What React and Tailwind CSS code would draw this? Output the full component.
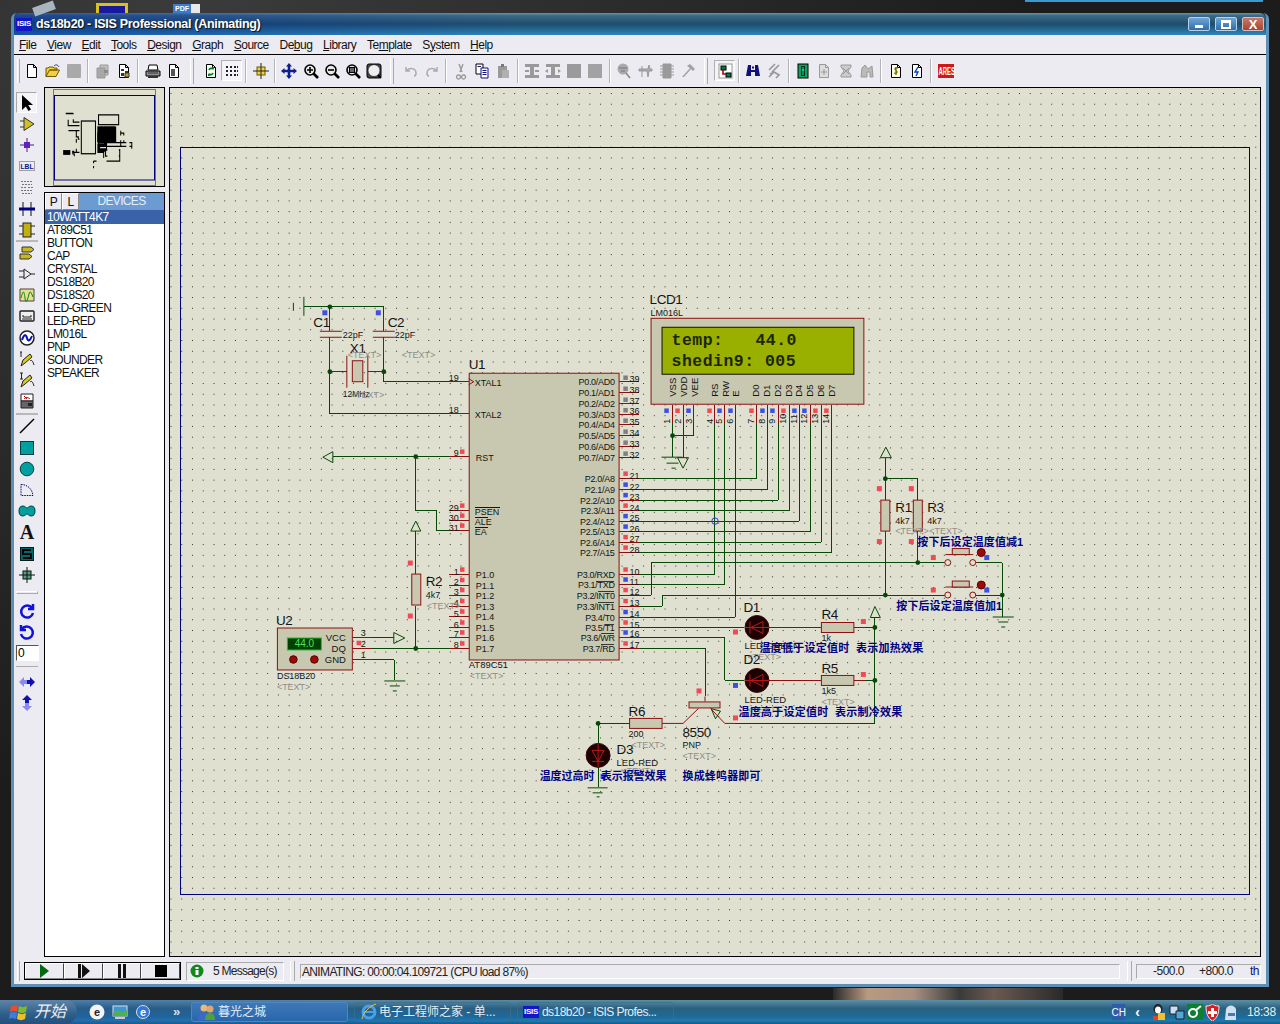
import React from 'react'

const RED = '#8c1010'
const GREEN = '#064806'
const NAVY = '#000080'
const GREY = '#8e8e88'
const INK = '#141414'

// ---- small svg helpers ----
function Ico({ children, size = 16 }) {
  return <svg width={size} height={size} viewBox="0 0 16 16" className="block overflow-visible">{children}</svg>
}

const Doc = ({ f = '#fff', s = '#000' }) => <path d="M3.5 1.5h6l3 3v10h-9z M9.5 1.5v3h3" fill={f} stroke={s} />
const Mag = ({ children }) => (
  <>
    <circle cx="7" cy="7" r="5" fill="#e8e8e8" stroke="#000" strokeWidth="1.6" />
    <path d="M10.5 10.5L15 15" stroke="#000" strokeWidth="2.6" />
    {children}
  </>
)

const toolbarIcons = {
  new: <Doc />,
  open: <><path d="M1 13.5V5h2l1-1h4l1 1h3v2H4.5L1 13.5h10l3.5-6.5H4.5" fill="#f0d040" stroke="#6a5a00" /><path d="M9 3c2-2 4-1 5 1" fill="none" stroke="#30308a" /></>,
  save: <rect x="1" y="1" width="14" height="14" rx="1" fill="#a9a9a9" />,
  imp: <><path d="M5 2h8v10H5z" fill="#c0c0c0" stroke="#999" /><path d="M2 5h8v10H2z" fill="#a8a8a8" stroke="#999" /><path d="M9 7h4v3H9z" fill="#8c8c8c" /></>,
  exp: <><Doc /><path d="M5 6h3v2H5zM9 8h3v2H9zM5 10h3v3H5z" fill="#333" /><path d="M9 10h4v4H9z" fill="#c8a020" stroke="#333" /></>,
  print: <><path d="M4 2h8l1 5H3z" fill="#fff" stroke="#000" /><path d="M1 8h14v5H1z" fill="#909090" stroke="#000" /><path d="M3 13h10v2H3z" fill="#333" /><path d="M3 10h10" stroke="#333" /></>,
  area: <><Doc /><path d="M5 6h4v7H5z" fill="#555" /></>,
  refresh: <><Doc f="#f4fff4" /><path d="M6 7a2.5 2.5 0 0 1 4-1M10 10a2.5 2.5 0 0 1-4 1" fill="none" stroke="#008020" strokeWidth="1.7" /><path d="M9 4h2v3zM7 13H5v-3z" fill="#008020" /></>,
  grid: <path d="M2 3h2v2H2zM6 3h2v2H6zM10 3h2v2h-2zM13 3h1v2h-1zM2 7h2v2H2zM6 7h2v2H6zM10 7h2v2h-2zM13 7h1v2h-1zM2 11h2v2H2zM6 11h2v2H6zM10 11h2v2h-2zM13 11h1v2h-1z" fill="#222" />,
  origin: <><rect x="4" y="4" width="8" height="8" fill="#f0d040" stroke="#6a5a00" /><path d="M0 8h16M8 0v16" stroke="#222" /></>,
  pan: <path d="M8 0l3 3.5H9.3v3.2h3.2V5L16 8l-3.5 3V9.3H9.3v3.2H11L8 16l-3-3.5h1.7V9.3H3.5V11L0 8l3.5-3v1.7h3.2V3.5H5z" fill="#10208a" />,
  zin: <Mag><path d="M4 7h6M7 4v6" stroke="#000" strokeWidth="1.6" /></Mag>,
  zout: <Mag><path d="M4 7h6" stroke="#000" strokeWidth="1.6" /></Mag>,
  zall: <Mag><rect x="4.5" y="4.5" width="5" height="5" fill="#666" stroke="#000" /></Mag>,
  zarea: <><rect x="1" y="1" width="14" height="14" rx="2" fill="#444" stroke="#000" /><circle cx="8" cy="7.5" r="5.5" fill="#eee" /><path d="M12 12l3 3" stroke="#000" strokeWidth="2" /></>,
  undo: <path d="M3 4v4h4M3.5 8C6 4 13 5 13 10c0 2-1 3-2 3" fill="none" stroke="#aaa" strokeWidth="1.5" />,
  redo: <path d="M13 4v4H9M12.500 8C10 4 3 5 3 10c0 2 1 3 2 3" fill="none" stroke="#aaa" strokeWidth="1.5" />,
  cut: <path d="M6 1l3 8M10 1L7 9M5.500 12a2 2 0 1 0 .1 0M10.500 12a2 2 0 1 0 .1 0" fill="none" stroke="#999" strokeWidth="1.4" />,
  copy: <><path d="M2 1h7v10H2z" fill="#fff" stroke="#000" /><path d="M7 5h7v10H7z" fill="#fff" stroke="#10107a" /><path d="M8.500 7.500h4M8.500 9.500h4M8.500 11.500h4M3.500 3.500h3.500" stroke="#10107a" /></>,
  paste: <><path d="M3 3h9v12H3z" fill="#999" /><path d="M6 1h3v3H6z" fill="#777" /><path d="M7 7h7v8H7z" fill="#b0b0b0" /></>,
  bcopy: <path d="M1 1h14v3h-5v8h5v3H1v-3h5V4H1zM1 7h4v2H1zM11 7h4v2h-4z" fill="#999" />,
  bmove: <path d="M1 1h14v3h-5v8h5v3H1v-3h5V4H1zM0 8l3-2v4zM16 8l-3-2v4z" fill="#999" />,
  brot: <rect x="1" y="1" width="14" height="14" fill="#9a9a9a" />,
  bdel: <rect x="1" y="1" width="14" height="14" fill="#a2a2a2" />,
  pick: <><circle cx="7" cy="6" r="5.5" fill="#aaa" /><path d="M3 5h8M5 8h4M10 10l4 5" stroke="#888" strokeWidth="1.6" /></>,
  make: <path d="M2 6h9l1-4 1 4h2v2h-3l-1 6-1-6H2zM5 3v11" stroke="#999" fill="#aaa" />,
  pack: <path d="M4 1h8v14H4zM1 3h3M1 6h3M1 9h3M1 12h3M12 3h3M12 6h3M12 9h3M12 12h3" fill="#9a9a9a" stroke="#9a9a9a" />,
  decomp: <path d="M2 14L10 5l-3-2 3-2 5 5-2 2-2-2-7 8z" fill="#a0a0a0" />,
  wire: <><rect x="2" y="1" width="13" height="14" fill="#fff" stroke="#999" /><rect x="4" y="3" width="5" height="4" fill="#008040" stroke="#000" /><rect x="9" y="10" width="5" height="4" fill="#008040" stroke="#000" /><path d="M6 7v4h3" fill="none" stroke="#b00000" strokeWidth="1.6" /></>,
  find: <path d="M3 2h3v5h4V2h3l2 11H10V9H6v4H1z M7 3.500h2v2H7z" fill="#10107a" />,
  prop: <path d="M9 1L3 7M13 2L6 9M4 11l4-2 5 3-3 3M3 14l5-5" stroke="#999" strokeWidth="1.7" fill="none" />,
  child: <><rect x="3" y="1" width="10" height="14" fill="#10a060" stroke="#000" /><path d="M6 3h4v10H6z" fill="#003010" /><path d="M8 4v8M6.500 7h3" stroke="#30e0c0" /></>,
  add: <><Doc f="#ddd" s="#999" /><path d="M8 6v6M5 9h6" stroke="#999" /></>,
  rem: <path d="M3 2h10v2l-3 4 3 4v2H3v-2l3-4-3-4zM5 5l6 6M11 5l-6 6" fill="#ccc" stroke="#999" />,
  tape: <path d="M3 5l3-3 3 4 4-3 1 11h-3V9H8v5H2z" fill="#bbb" stroke="#999" />,
  bom: <><Doc f="#ffffe8" /><path d="M10 5c-3-1-4 1-2 2.500s1 3.500-2 2.500M8 4v8" fill="none" stroke="#7a6a00" strokeWidth="1.3" /></>,
  drc: <><Doc /><path d="M9 4L6 9h3l-2 4" fill="none" stroke="#0040c0" strokeWidth="1.4" /></>,
  ares: <><rect x="0" y="1" width="16" height="14" fill="#d01818" /><text transform="translate(0.500 12) scale(.54 1)" fontSize="11" fontWeight="700" fill="#fff">ARES</text></>,
}

// order of the toolbar: name, 's' small separator, 'g' grip
const toolbar = ['new', 'open', 'save', 's', 'imp', 'exp', 's', 'print', 'area', 'g', 'refresh', 'grid', 's', 'origin', 's', 'pan', 'zin', 'zout', 'zall', 'zarea', 'g', 'undo', 'redo', 's', 'cut', 'copy', 'paste', 's', 'bcopy', 'bmove', 'brot', 'bdel', 's', 'pick', 'make', 'pack', 'decomp', 'g', 'wire', 's', 'find', 'prop', 's', 'child', 'add', 'rem', 'tape', 's', 'bom', 'drc', 's', 'ares']

const sideIcons = {
  select: <path d="M3 0v15l3.800-3.500 2.700 4.500 2.500-1.500-2.800-4.500H14z" fill="#000" />,
  comp: <><path d="M5 1.500v13L15 8z" fill="#d0c020" stroke="#333" /><path d="M1 5h4M1 11h4" stroke="#333" /></>,
  junc: <><path d="M8 1v14M1 8h14" stroke="#402080" /><rect x="5" y="5" width="6" height="6" fill="#6020c0" /></>,
  lbl: <><rect x="0.500" y="3.500" width="15" height="9" fill="none" stroke="#555" strokeDasharray="1 1" /><text x="1.500" y="11" fontSize="8" fontWeight="700" fill="#10107a" textLength="13" lengthAdjust="spacingAndGlyphs">LBL</text></>,
  script: <path d="M2 2.500h12M3 5.500h10M2 8.500h5M9 8.500h5M2 11.500h12M3 14.500h10" stroke="#777" strokeDasharray="2 1" />,
  bus: <><path d="M4 1v14M12 1v14" stroke="#111" /><path d="M0 8h16" stroke="#000080" strokeWidth="3" /></>,
  sub: <><rect x="4" y="1" width="8" height="14" fill="#c0b010" stroke="#222" /><path d="M0 4h4M0 12h4M12 4h4M12 12h4" stroke="#222" /></>,
  term: <path d="M3 2h9l3 2.500L12 7H3zM1 9h9l3 2.500L10 14H1z" fill="#c8b818" stroke="#333" />,
  port: <path d="M5 3v10l7-5zM0 5h5M0 11h5M12 8h4" fill="none" stroke="#222" />,
  graph: <><path d="M1 2v12h14V2z" fill="#e8e088" stroke="#444" /><path d="M2 11c2-8 3-8 4 0s3 0 4-4 2-2 4 3" fill="none" stroke="#008030" /></>,
  tape: <><rect x="1" y="3" width="14" height="10" rx="1" fill="#eee" stroke="#222" strokeWidth="1.4" /><path d="M4 7v2h8V7M3 11h10" stroke="#222" fill="none" /></>,
  gen: <><circle cx="8" cy="8" r="7" fill="#fff" stroke="#222" strokeWidth="1.5" /><path d="M3 10c2-6 4-6 5-2s3 3 5-2" fill="none" stroke="#0010c0" strokeWidth="2" /></>,
  vprobe: <><path d="M2 15l2-6 7-6 2 3-7 6z" fill="#d8c820" stroke="#222" /><path d="M1 1h2M2 1v5M11 10c2-2 3 1 4 4" fill="none" stroke="#222" /></>,
  iprobe: <><path d="M2 15l2-6 7-6 2 3-7 6z" fill="#d8c820" stroke="#222" /><path d="M1 1h3M2.500 1v6M1 7h3M11 10c2-2 3 1 4 4" fill="none" stroke="#222" /></>,
  inst: <><path d="M2 1h12v7H2z" fill="#fff" stroke="#222" /><path d="M8 6L5 3M5 6c2-2 4-2 6 0" stroke="#a00" fill="none" /><path d="M2 8h12v7H2z" fill="#666" stroke="#222" /><path d="M9 10h4v3H9z" fill="#222" /></>,
  line: <path d="M1 15L15 1" stroke="#000" strokeWidth="1.4" />,
  box: <rect x="1.500" y="1.500" width="13" height="13" fill="#00a0a0" stroke="#004040" />,
  circle: <circle cx="8" cy="8" r="6.800" fill="#00a0a0" stroke="#004040" />,
  arc: <path d="M2 2.500c6 0 11 4 12 11H2z" fill="none" stroke="#000080" strokeDasharray="1.500 1" />,
  path: <path d="M4 3c2 0 3 2 4 2s2-2 4-2c3 0 4 2 4 5s-1 5-4 5c-2 0-3-2-4-2s-2 2-4 2c-3 0-4-2-4-5s1-5 4-5z" fill="#00a0a0" stroke="#004040" />,
  text: <text x="8" y="15" textAnchor="middle" fontSize="20" fontWeight="700" fontFamily="Liberation Serif" fill="#111">A</text>,
  symbol: <><rect x="1.500" y="1.500" width="13" height="13" fill="#006868" stroke="#002020" /><path d="M12 4H4v4h8v4H4" fill="none" stroke="#000" strokeWidth="2" /></>,
  marker: <><rect x="4" y="4" width="8" height="8" fill="#50a080" stroke="#111" /><path d="M0 8h16M8 0v16" stroke="#111" /></>,
  cw: <path d="M13 4A6 6 0 1 0 14 9M14 0v5H9" fill="none" stroke="#1010e0" strokeWidth="2.500" />,
  ccw: <path d="M3 4A6 6 0 1 1 2 9M2 0v5h5" fill="none" stroke="#1010e0" strokeWidth="2.500" />,
  mirrorh: <><path d="M0 8l5-5v3h3v4H5v3z" fill="#8a8af0" /><path d="M16 8l-5-5v3H8v4h3v3z" fill="#1010b0" /></>,
  mirrorv: <><path d="M8 0l5 5h-3v3H6V5H3z" fill="#1010b0" /><path d="M8 16l5-5h-3V8H6v3H3z" fill="#8a8af0" /></>,
}

const Grip = ({ className }) => <div className={className} />

function SideBtn({ name, active }) {
  return (
    <div className={`flex h-[21.2px] w-[21px] items-center justify-center ${active ? 'border border-t-[#a8a8a8] border-r-white border-b-white border-l-[#a8a8a8] bg-[#f4f4f8]' : ''}`}>
      <Ico>{sideIcons[name]}</Ico>
    </div>
  )
}

function ToolStrip() {
  const a = ['comp', 'junc', 'lbl', 'script', 'bus', 'sub']
  const b = ['term', 'port', 'graph', 'tape', 'gen', 'vprobe', 'iprobe', 'inst']
  const c = ['line', 'box', 'circle', 'arc', 'path', 'text', 'symbol', 'marker']
  return (
    <div className="flex w-[30px] shrink-0 flex-col items-start pl-[2px] pt-[6px]">
      <SideBtn name="select" active />
      {a.map(n => <SideBtn key={n} name={n} />)}
      <Grip className="h-[2px] w-[22px] bg-[#b8b8b8]" />
      {b.map(n => <SideBtn key={n} name={n} />)}
      <Grip className="my-[1px] h-[2px] w-[22px] bg-[#b8b8b8]" />
      {c.map(n => <SideBtn key={n} name={n} />)}
      <Grip className="mb-[7px] mt-[6px] h-[3px] w-[22px] border border-b-[#aaa] border-l-white border-r-[#aaa] border-t-white" />
      <SideBtn name="cw" />
      <SideBtn name="ccw" />
      <div className="mt-[1px] h-[16px] w-[23px] border border-t-[#555] border-l-[#555] border-b-white border-r-white bg-white pl-[1px] text-[12px] leading-[14px] text-black">0</div>
      <Grip className="my-[5px] h-[1px] w-[22px] bg-[#aaa]" />
      <SideBtn name="mirrorh" />
      <SideBtn name="mirrorv" />
    </div>
  )
}

function Sidebar() {
  const devices = ['AT89C51', 'BUTTON', 'CAP', 'CRYSTAL', 'DS18B20', 'DS18S20', 'LED-GREEN', 'LED-RED', 'LM016L', 'PNP', 'SOUNDER', 'SPEAKER']
  return (
    <div className="flex w-[121px] shrink-0 flex-col gap-[5px] pb-[1px] pt-[1px]">
      <div className="relative h-[100px] border border-black bg-[#e0e0d0]">
        <Minimap />
      </div>
      <div className="flex flex-1 flex-col border border-black bg-white text-[12px] tracking-[-0.65px] text-[#101010]">
        <div className="flex h-[17px] bg-[#6c9bd2]">
          <div className="flex w-[17px] items-center justify-center border border-r-[#888] border-b-[#888] border-l-white border-t-white bg-[#ecebf1]">P</div>
          <div className="flex w-[17px] items-center justify-center border border-r-[#888] border-b-[#888] border-l-white border-t-white bg-[#ecebf1]">L</div>
          <div className="flex-1 text-center leading-[16px] text-[#e4eef8]">DEVICES</div>
        </div>
        <div className="h-[13.6px] bg-[#3a62a8] pl-[2px] leading-[14px] text-white">10WATT4K7</div>
        {devices.map(d => <div key={d} className="h-[13px] pl-[2px] leading-[13px]">{d}</div>)}
      </div>
    </div>
  )
}

function Minimap() {
  return (
    <svg className="block h-full w-full" viewBox="45 88 119 98">
      <rect x="53.500" y="89.500" width="102" height="96" fill="none" stroke="#20b020" />
      <rect x="54.500" y="95.500" width="100" height="84.500" fill="none" stroke="#000080" />
      <g transform="translate(37 78.500) scale(.0945 .114)" fill="none" stroke="#000" vectorEffect="non-scaling-stroke">
        <path d={WIRES} strokeWidth="11" />
        <rect x="469" y="373" width="150" height="287" strokeWidth="11" />
        <rect x="651" y="319" width="213" height="86" strokeWidth="11" />
        <rect x="277" y="628" width="75" height="42" fill="#000" />
        <rect x="639" y="420" width="190" height="140" fill="#000" />
      </g>
    </svg>
  )
}

// ---- schematic, in page coordinates ----
const WIRES = [
  'M304 307H384M330 307V314M384 307V314M330 362V414H449M384 358V382H449',
  'M333 457H449M416 457V511H437V531H449',
  'M639 479H757V423M639 490H768V423M639 500.500H779V423M639 511H790V423M639 521.500H800V423M639 532H811V423M639 542.500H822V423M639 553H832.500V423',
  'M639 575H715V423M639 585H725.500V423M639 595.500H651.500V563H945M639 606.500H662.500V595.500H945M639 617.500H736V423',
  'M639 628H745M639 638H725.500V681H745M639 649H705.500V697',
  'M673 423V457M683.500 423V458M694 423V436H673',
  'M979 563H1003V617M979 595.500H1003',
  'M886 458V501M886 479H918.500V501M886 541V595M918.500 541V563',
  'M866 628H875.500M866 681H875.500M875.500 618V724H736',
  'M598.500 724H630M598.500 724V744M598.500 768V788',
  'M416 531V563M416 617V649M372 649H449M372 638.500H394M372 660.500H394.600V681',
].join('')

const pinsL = [575, 585.5, 595.5, 606.5, 617, 628, 638, 649]
const p0 = [382, 393, 404, 414.5, 425, 436, 447, 458]
const p2 = [479, 490, 500.5, 511, 521.5, 532, 542.5, 553]
const p3 = [575, 585, 595.5, 606.5, 617.5, 628, 638, 649]

const LEADS = [
  'M330 314V331M330 337V362M384 314V331M384 337V358M330 372H347M368 372H384',
  'M449 382H469M449 414H469M449 457H469M449 511H469M449 521H469M449 531H469',
  ...pinsL.map(y => `M449 ${y}H469`),
  ...[...p0, ...p2, ...p3].map(y => `M619 ${y}H639`),
  ...[673, 683.5, 694, 715, 725.5, 736, 757, 768, 779, 790, 800, 811, 822, 832.5].map(x => `M${x} 405V423`),
  'M945 563H948M976 563H979M945 595.500H948M976 595.500H979',
  'M769 628H822M855 628H866M769 681H822M855 681H866',
  'M886 501V541M918.500 501V541',
  'M352 638.500H372M352 649H372M352 660.500H372',
  'M598.500 744V768M416 563V574M416 606V617',
].join('')

const Sq = ({ x, y, c = 'r', s = 5 }) => (
  <rect x={x - s / 2} y={y - s / 2} width={s} height={s} fill={c === 'r' ? '#f04a55' : c === 'b' ? '#3f50e0' : '#808080'} />
)

function T({ x, y, s = 9, c = INK, a, w, bold, children, r, ls }) {
  return (
    <text
      x={x}
      y={y}
      fontSize={s}
      fill={c}
      textAnchor={a}
      fontWeight={bold ? 700 : 400}
      letterSpacing={ls}
      textLength={w}
      lengthAdjust={w ? 'spacing' : undefined}
      transform={r ? `rotate(-90 ${x} ${y})` : undefined}
    >
      {children}
    </text>
  )
}

const Ref = props => <T s={13.500} ls={-0.4} {...props} />
const Tag = ({ x, y }) => <T x={x} y={y} c={GREY} s={9}>{'<TEXT>'}</T>
const Note = props => <T s={11} c={NAVY} bold {...props} />

const Arrow = ({ points }) => <polygon points={points} fill="none" stroke={GREEN} />
const Dot = ({ x, y }) => <circle cx={x} cy={y} r="2.400" fill={GREEN} />

function Led({ x, y, down }) {
  return (
    <g>
      <circle cx={x} cy={y} r="12" fill="#1c0202" stroke="#3a0808" />
      {down
        ? <path d={`M${x - 6} ${y - 5}h12l-6 11zM${x - 6} ${y + 6}h12M${x} ${y - 12}v24`} fill="none" stroke="#c01818" />
        : <path d={`M${x + 6} ${y - 6}v12l-12-6zM${x - 7} ${y - 6}v12M${x - 12} ${y}h24`} fill="none" stroke="#c01818" />}
    </g>
  )
}

function Button({ y }) {
  return (
    <g>
      <path d={`M946 ${y - 8}H974`} stroke={RED} />
      <rect x="953" y={y - 14} width="17" height="6" fill="#c8c8b0" stroke={RED} />
      <circle cx="948.500" cy={y} r="3" fill="#e0e0d0" stroke={RED} />
      <circle cx="973.500" cy={y} r="3" fill="#e0e0d0" stroke={RED} />
      <circle cx="982" cy={y - 10} r="4" fill="#a00808" stroke="#500" />
      <Sq x={934} y={y - 5} />
      <Sq x={987.500} y={y - 5} c="b" />
    </g>
  )
}

const Res = ({ x, y, v }) => v
  ? <rect x={x} y={y} width="9" height="31" fill="#c8c8b0" stroke={RED} />
  : <rect x={x} y={y} width="32.500" height="10" fill="#c8c8b0" stroke={RED} />

function Ground({ x, y, w = 21 }) {
  return <path d={`M${x - w / 2} ${y}h${w}M${x - 5} ${y + 5}h10M${x - 2} ${y + 10}h4`} stroke={GREEN} fill="none" />
}

function Chip() {
  const names0 = ['P0.0/AD0', 'P0.1/AD1', 'P0.2/AD2', 'P0.3/AD3', 'P0.4/AD4', 'P0.5/AD5', 'P0.6/AD6', 'P0.7/AD7']
  const names2 = ['P2.0/A8', 'P2.1/A9', 'P2.2/A10', 'P2.3/A11', 'P2.4/A12', 'P2.5/A13', 'P2.6/A14', 'P2.7/A15']
  const names3 = ['P3.0/RXD', 'P3.1/TXD', 'P3.2/INT0', 'P3.3/INT1', 'P3.4/T0', 'P3.5/T1', 'P3.6/WR', 'P3.7/RD']
  const c2 = 'rbbrbbrr'
  const c3 = 'rbrrbrbr'
  return (
    <g>
      <rect x="469.500" y="373.500" width="150" height="287" fill="#c8c8b0" stroke={RED} />
      <T x={475} y={386}>XTAL1</T>
      <T x={475} y={418}>XTAL2</T>
      <T x={476} y={461}>RST</T>
      <T x={475} y={515}>PSEN</T>
      <T x={475} y={525}>ALE</T>
      <T x={475} y={535}>EA</T>
      <path d="M475 507.500H500M475 517.500H488M475 528H488" stroke={INK} shapeRendering="crispEdges" />
      <path d="M469 379l5 3-5 3" fill="none" stroke={RED} />
      {pinsL.map((y, i) => <T key={y} x={476} y={y + 3.500}>{`P1.${i}`}</T>)}
      {names0.map((n, i) => <T key={n} x={615} y={p0[i] + 3.500} a="end" ls={-0.3}>{n}</T>)}
      {names2.map((n, i) => <T key={n} x={615} y={p2[i] + 3.500} a="end" ls={-0.3}>{n}</T>)}
      {names3.map((n, i) => <T key={n} x={615} y={p3[i] + 3.500} a="end" ls={-0.3}>{n}</T>)}
      <path d="M596 581.500H614M598 591.500H614M598 602.500H614M605 624.500H614M601 634.500H614M601 645.500H614" stroke={INK} strokeWidth=".8" shapeRendering="crispEdges" />

      {p0.map((y, i) => <g key={y}><Sq x={626} y={y - 4} c="g" s={4.500} /><T x={630} y={y}>{39 - i}</T></g>)}
      {p2.map((y, i) => <g key={y}><Sq x={626} y={y - 5} c={c2[i]} s={4.500} /><T x={630} y={y}>{21 + i}</T></g>)}
      {p3.map((y, i) => <g key={y}><Sq x={626} y={y - 5} c={c3[i]} s={4.500} /><T x={630} y={y}>{10 + i}</T></g>)}
      {pinsL.map((y, i) => <g key={y}><Sq x={462.500} y={y - 5} s={4.500} /><T x={459} y={y} a="end">{i + 1}</T></g>)}
      <T x={449} y={381}>19</T>
      <T x={449} y={413}>18</T>
      <T x={459} y={456} a="end">9</T>
      <Sq x={462.500} y={452} s={4.500} />
      {[['29', 511], ['30', 521], ['31', 531]].map(([n, y]) => <g key={n}><Sq x={462.500} y={y - 5} s={4.500} /><T x={459} y={y} a="end">{n}</T></g>)}
    </g>
  )
}

const LcdText = ({ x, y, children }) => (
  <text x={x} y={y} fontSize="16.500" fontWeight="700" fontFamily="Liberation Mono" fill="#1c2400" letterSpacing="0.5">{children}</text>
)

function Lcd() {
  const pins = [[673, 'b', 1, 667], [683.5, 'r', 2, 678], [694, 'b', 3, 689], [715, 'r', 4, 710], [725.5, 'b', 5, 720], [736, 'b', 6, 731], [757, 'r', 7, 752], [768, 'b', 8, 763], [779, 'b', 9, 773], [790, 'r', 10, 784], [800, 'b', 11, 795], [811, 'b', 12, 805], [822, 'r', 13, 816], [832.5, 'r', 14, 827]]
  const labels = [[673, 'VSS'], [684, 'VDD'], [695, 'VEE'], [716, 'RS'], [727, 'RW'], [737, 'E'], [757, 'D0'], [768, 'D1'], [779, 'D2'], [790, 'D3'], [800, 'D4'], [811, 'D5'], [822, 'D6'], [833, 'D7']]
  return (
    <g>
      <rect x="651.500" y="318.500" width="213" height="86" fill="#c8c8b0" stroke={RED} />
      <rect x="662.500" y="327.500" width="192" height="47" fill="#9ab000" stroke="#101010" />
      <LcdText x={672} y={345}>temp:</LcdText>
      <LcdText x={756} y={345}>44.0</LcdText>
      <LcdText x={672} y={366}>shedin9: 005</LcdText>
      {labels.map(([x, n]) => <T key={n} x={x + 3} y={397} r s={9.500}>{n}</T>)}
      {pins.map(([x, c, n, sx]) => (
        <g key={n}>
          <Sq x={sx} y={411} c={c} s={4.500} />
          <T x={sx + 3} y={424} r s={9}>{n}</T>
        </g>
      ))}
    </g>
  )
}

function Schematic() {
  return (
    <svg className="block h-full w-full" viewBox="170 88 1091 868" preserveAspectRatio="xMinYMin" fontFamily="Liberation Sans, Noto Sans CJK SC, sans-serif">
      <defs>
        <pattern id="dots" x="170.500" y="93" width="10.750" height="10.750" patternUnits="userSpaceOnUse">
          <rect width="1" height="1" fill="#333" />
        </pattern>
      </defs>
      <rect x="170" y="88" width="1091" height="868" fill="url(#dots)" shapeRendering="crispEdges" />
      <rect x="181" y="148" width="1069" height="747" fill="none" stroke={NAVY} strokeWidth="1" shapeRendering="crispEdges" />

      <path d={WIRES} fill="none" stroke={GREEN} shapeRendering="crispEdges" />
      <path d={LEADS} fill="none" stroke={RED} shapeRendering="crispEdges" />
      <path d="M662.600 724H683.500L699 709M711 709L725.300 724H736M705.500 697V702" fill="none" stroke={RED} />

      {/* battery and caps */}
      <path d="M293.500 303v8M304 297v19" stroke={GREEN} />
      <path d="M320 331.500h22M320 337.500h22M373 331.500h22M373 337.500h22M347 356v32M368 356v32" stroke={RED} />
      <rect x="352.500" y="361" width="10.500" height="21" fill="#c8c8b0" stroke={RED} />
      <Sq x={325} y={313} c="b" />
      <Sq x={378.500} y={313} c="b" />
      <Dot x={330} y={307} /><Dot x={330} y={372} /><Dot x={384} y={372} /><Dot x={416} y={457} /><Dot x={416} y={649} />
      <Ref x={313.500} y={327}>C1</Ref>
      <Ref x={388} y={327}>C2</Ref>
      <T x={343} y={338}>22pF</T>
      <T x={395} y={338}>22pF</T>
      <Ref x={350} y={353}>X1</Ref>
      <Tag x={348} y={358} />
      <Tag x={402} y={358} />
      <T x={343} y={397} s={8.500}>12MHz</T>
      <Tag x={351} y={398} />

      <Arrow points="323,457.500 333,452 333,463" />
      <Chip />
      <Ref x={469} y={369}>U1</Ref>
      <T x={469} y={669} s={9.500}>AT89C51</T>
      <Tag x={470} y={680} />

      {/* LCD */}
      <Ref x={650} y={304}>LCD1</Ref>
      <T x={651} y={316} s={9}>LM016L</T>
      <Tag x={652} y={326} />
      <Lcd />
      <Dot x={673} y={436} />
      <path d="M662 457.500h21M667 463.500h12M672 468.500h4" stroke={GREEN} />
      <Arrow points="678,458 689,458 683.500,468.500" />
      <circle cx="715.500" cy="521.500" r="3.200" fill="none" stroke="#3040c0" />

      {/* pull ups and push buttons */}
      <Arrow points="881,458 892,458 886.500,447.500" />
      <Dot x={886} y={479} /><Dot x={918.500} y={563} /><Dot x={886} y={595.500} /><Dot x={1003} y={595.500} />
      <Res x={881.500} y={500.500} v />
      <Res x={914} y={500.500} v />
      <Sq x={880} y={489} /><Sq x={912} y={489} /><Sq x={880} y={542} /><Sq x={912} y={542} />
      <Ref x={896} y={512}>R1</Ref>
      <Ref x={928} y={512}>R3</Ref>
      <T x={896} y={524}>4k7</T>
      <T x={928} y={524}>4k7</T>
      <Tag x={896} y={534} />
      <Tag x={930} y={534} />
      <Button y={563} />
      <Button y={595.500} />
      <Note x={918} y={546} w={106}>按下后设定温度值减1</Note>
      <Note x={897} y={610} w={106}>按下后设定温度值加1</Note>
      <Ground x={1004} y={617.500} />

      {/* leds */}
      <Led x={757.500} y={628} />
      <Led x={757.500} y={681} />
      <Res x={822} y={623} /><Res x={822} y={676} />
      <Arrow points="871,618 881,618 875.500,607" />
      <Dot x={875.500} y={628} /><Dot x={875.500} y={681} />
      <Sq x={736} y={632.500} /><Sq x={864} y={622} /><Sq x={736} y={686} c="b" /><Sq x={864} y={675} />
      <Ref x={744} y={612}>D1</Ref>
      <T x={745} y={650} s={9.500}>LED-GREEN</T>
      <Tag x={748} y={661} />
      <Ref x={744} y={665}>D2</Ref>
      <T x={745} y={704} s={9.500}>LED-RED</T>
      <Tag x={748} y={714} />
      <Ref x={822} y={619}>R4</Ref>
      <T x={822} y={642}>1k</T>
      <Ref x={822} y={674}>R5</Ref>
      <T x={822} y={695}>1k5</T>
      <Tag x={822} y={706} />
      <Note x={760} y={653} w={164}>{'温度低于设定值时\u00a0\u00a0表示加热效果'}</Note>
      <Note x={739} y={717} w={164}>{'温度高于设定值时\u00a0\u00a0表示制冷效果'}</Note>

      {/* buzzer transistor */}
      <rect x="689.500" y="702.500" width="31" height="6" fill="#c8c8b0" stroke={RED} />
      <polygon points="711.700,709.300 721,711.700 716,719.300" fill="none" stroke={GREEN} />
      <Sq x={699.500} y={691.500} /><Sq x={736} y={718.500} />
      <Res x={630} y={719} />
      <Dot x={598.500} y={724} />
      <Ref x={683} y={738}>8550</Ref>
      <T x={683} y={749}>PNP</T>
      <Tag x={683} y={760} />
      <Ref x={629} y={717}>R6</Ref>
      <T x={629} y={738} s={9}>200</T>
      <Tag x={632} y={749} />
      <Led x={598.500} y={756} down />
      <Ref x={617} y={755}>D3</Ref>
      <T x={617} y={767} s={9.500}>LED-RED</T>
      <Tag x={622} y={775} />
      <Sq x={603.500} y={777} c="b" />
      <Note x={540} y={781} w={127}>{'温度过高时\u00a0\u00a0表示报警效果'}</Note>
      <Note x={683} y={781} w={78}>换成蜂鸣器即可</Note>
      <path d="M588 788.500h20M593 793.500h10M597 797.500h3" stroke={GREEN} />

      {/* DS18B20 */}
      <rect x="277.500" y="628.500" width="75" height="42" fill="#c8c8b0" stroke={RED} />
      <rect x="287.500" y="638.500" width="34" height="12" fill="#004000" stroke="#20c030" />
      <T x={304.500} y={648} s={10} c="#50e060" a="middle">44.0</T>
      <circle cx="293.500" cy="660" r="3.800" fill="#a00808" stroke="#500" />
      <circle cx="314.500" cy="660" r="3.800" fill="#a00808" stroke="#500" />
      <T x={346} y={642} a="end" s={9.500}>VCC</T>
      <T x={346} y={653} a="end" s={9.500}>DQ</T>
      <T x={346} y={664} a="end" s={9.500}>GND</T>
      <T x={361} y={637}>3</T>
      <T x={361} y={648}>2</T>
      <T x={361} y={659}>1</T>
      <Sq x={359} y={643.500} s={4.500} />
      <Arrow points="394,633 394,644 405,638.500" />
      <Ground x={395} y={681.500} />
      <Ref x={276} y={625}>U2</Ref>
      <T x={277} y={680} s={9}>DS18B20</T>
      <Tag x={277} y={691} />

      {/* R2 */}
      <Arrow points="411,531.500 421,531.500 416,521.500" />
      <Res x={412} y={574.500} v />
      <Sq x={410.500} y={563.500} /><Sq x={410.500} y={616.500} />
      <Ref x={426} y={586}>R2</Ref>
      <T x={426} y={598}>4k7</T>
      <Tag x={427} y={609} />
    </svg>
  )
}

// ---- window chrome ----
const IsisLogo = ({ w = 16, h = 13 }) => (
  <span style={{ width: w, height: h }} className="flex shrink-0 items-center justify-center bg-[#1515c8] text-[8px] font-bold leading-none tracking-[-0.3px] text-white">ISIS</span>
)

function TitleBar() {
  return (
    <div className="flex h-[22px] shrink-0 items-center rounded-t-[6px] bg-[linear-gradient(90deg,rgba(0,35,150,.5),rgba(0,35,150,0)_40%),linear-gradient(180deg,#6a93a8,#3b6a86_12%,#1f4d6c_50%,#276e9c_80%,#2c87bd)] pl-[2px] pr-[2px]">
      <IsisLogo />
      <span className="ml-[4px] text-[12.500px] font-bold tracking-[-0.3px] text-white [text-shadow:1px_1px_1px_#111]">ds18b20 - ISIS Professional (Animating)</span>
      <div className="ml-auto flex items-center gap-[5px]">
        <div className="flex h-[14px] w-[22px] items-end justify-center rounded-[2px] border border-[#b8d0e0] bg-[linear-gradient(#6fa6d6,#2c6cb0)] pb-[2px]"><div className="h-[3px] w-[8px] bg-white" /></div>
        <div className="flex h-[14px] w-[22px] items-center justify-center rounded-[2px] border border-[#b8d0e0] bg-[linear-gradient(#6fa6d6,#2c6cb0)]"><div className="h-[9px] w-[10px] border-2 border-t-[3px] border-white" /></div>
        <div className="flex h-[14px] w-[22px] items-center justify-center rounded-[2px] border border-[#d0c0c0] bg-[linear-gradient(#c87a6a,#a84430)] text-[13px] font-bold leading-none text-white">X</div>
      </div>
    </div>
  )
}

function MenuBar() {
  const items = [['', 'F', 'ile'], ['', 'V', 'iew'], ['', 'E', 'dit'], ['', 'T', 'ools'], ['', 'D', 'esign'], ['', 'G', 'raph'], ['', 'S', 'ource'], ['De', 'b', 'ug'], ['', 'L', 'ibrary'], ['Te', 'm', 'plate'], ['S', 'y', 'stem'], ['', 'H', 'elp']]
  return (
    <div className="flex h-[20px] shrink-0 items-center gap-[10.700px] border-b border-black bg-[#ecebf1] pl-[5px] text-[12px] tracking-[-0.5px] text-[#111]">
      {items.map(([a, b, c]) => <span key={a + b + c}>{a}<span className="underline">{b}</span>{c}</span>)}
    </div>
  )
}

function Toolbar() {
  return (
    <div className="flex h-[31px] shrink-0 items-center bg-[#ecebf1] pl-[3px]">
      <Grip className="mr-[1px] h-[24px] w-[3px] border-l border-r border-l-white border-r-[#aaa]" />
      {toolbar.map((t, i) => {
        if (t === 's') return <div key={i} className="flex h-[24px] w-[7.600px] justify-center"><div className="h-full w-[2px] border-l border-r border-l-[#b4b4b4] border-r-white" /></div>
        if (t === 'g') return <div key={i} className="flex h-[26px] w-[15.500px] justify-center"><div className="h-full w-[4px] border-l border-r border-l-white border-r-[#aaa]" /></div>
        return (
          <div key={i} className={`flex h-[21px] w-[21.200px] items-center justify-center ${t === 'grid' || t === 'wire' ? 'border border-b-white border-l-[#b0b0b0] border-r-white border-t-[#b0b0b0] bg-[#f4f4f8]' : ''}`}>
            <Ico>{toolbarIcons[t]}</Ico>
          </div>
        )
      })}
    </div>
  )
}

const SimBtn = ({ children }) => (
  <div className="flex h-full flex-1 items-center justify-center border border-b-[#888] border-l-white border-r-[#444] border-t-white bg-[#ecebf1]">
    <svg width="14" height="14" viewBox="0 0 14 14">{children}</svg>
  </div>
)

function StatusBar() {
  return (
    <div className="flex h-[26px] shrink-0 items-center bg-[#ecebf1] pl-[3px] pr-[5px] text-[12px] text-[#222]">
      <Grip className="mr-[4px] h-[20px] w-[3px] border-l border-r border-l-white border-r-[#aaa]" />
      <div className="flex h-[18px] w-[157px] border border-black">
        <SimBtn><path d="M3 0l9 7-9 7z" fill="#006a10" /></SimBtn>
        <SimBtn><path d="M2 0h3v14H2zM6 0l8 7-8 7z" fill="#111" /></SimBtn>
        <SimBtn><path d="M3 0h3v14H3zM8 0h3v14H8z" fill="#111" /></SimBtn>
        <SimBtn><path d="M1 1h12v12H1z" fill="#000" /></SimBtn>
      </div>
      <div className="ml-[5px] flex h-[19px] w-[98px] items-center border border-b-white border-l-[#aaa] border-r-white border-t-[#aaa] pl-[3px]">
        <svg width="14" height="14" viewBox="0 0 14 14"><circle cx="7" cy="7" r="6.500" fill="#10891a" /><path d="M5.500 3h3v2h-3zM5.500 6h3v5h-3z" fill="#fff" /></svg>
        <span className="ml-[9px] tracking-[-0.75px]">5 Message(s)</span>
      </div>
      <Grip className="ml-[6px] h-[20px] w-[5px] border-l border-r border-l-white border-r-[#aaa]" />
      <div className="ml-[5px] h-[15px] flex-1 border border-b-white border-l-[#aaa] border-r-white border-t-[#aaa] pl-[1px] leading-[14px] tracking-[-0.65px]">ANIMATING: 00:00:04.109721 (CPU load 87%)</div>
      <Grip className="ml-[7px] h-[20px] w-[5px] border-l border-r border-l-white border-r-[#aaa]" />
      <div className="ml-[4px] flex h-[15px] w-[125px] items-center border border-b-white border-l-[#aaa] border-r-white border-t-[#aaa] leading-[14px] tracking-[-0.5px]">
        <span className="w-[47px] text-right">-500.0</span>
        <span className="w-[49px] text-right">+800.0</span>
        <span className="ml-[17px] text-[#10107a]">th</span>
      </div>
    </div>
  )
}

function TaskBtn({ active, children, icon }) {
  return (
    <div className={`flex h-[20px] w-[157px] items-center gap-[1px] rounded-[3px] pl-[5px] text-[12px] text-[#e4edf5] ${active ? 'border border-[#4f86bc] bg-[linear-gradient(#3d78b8,#2a66ac)]' : 'border border-[#3f6f88]/70'}`}>
      {icon}
      {children}
    </div>
  )
}

function TaskBar() {
  return (
    <div className="flex h-[24px] shrink-0 items-center bg-[linear-gradient(90deg,rgba(40,80,170,.3),rgba(40,80,170,0)_50%),linear-gradient(180deg,#5d8ea6,#2a617f_35%,#1d6a99_70%,#1f7aae_85%,#175a88)] text-white">
      <div className="flex h-full w-[77px] items-center gap-[5px] rounded-r-[12px] bg-[linear-gradient(#5e84a8,#2e5e8c_60%,#22507c)] pl-[9px]">
        <svg width="20" height="18" viewBox="0 0 20 18">
          <path d="M2 3c2-1.500 4-1.500 7 0l-1 6c-3-1.500-5-1.500-7 0z" fill="#e84c28" />
          <path d="M10 3c3 1.500 5 1.500 8 0l-1 6c-3 1.500-5 1.500-8 0z" fill="#7cbc2c" />
          <path d="M1 10c2-1.500 4-1.500 7 0l-1 6c-3-1.500-5-1.500-7 0z" fill="#3c7ce0" />
          <path d="M9 10c3 1.500 5 1.500 8 0l-1 6c-3 1.500-5 1.500-8 0z" fill="#f0c020" />
        </svg>
        <span className="text-[16px] italic text-[#eee]">开始</span>
      </div>
      <div className="ml-[12px] flex w-[102px] items-center gap-[7px]">
        <svg width="16" height="16" viewBox="0 0 16 16"><circle cx="8" cy="8" r="7.500" fill="#f4f4f4" /><text x="8" y="12" textAnchor="middle" fontSize="11" fontWeight="700" fill="#222">e</text></svg>
        <svg width="16" height="16" viewBox="0 0 16 16"><rect x="1" y="2" width="14" height="10" fill="#3a96d8" stroke="#ddd" /><path d="M1 9l5-3 4 2 5-2v6H1z" fill="#50b050" /><path d="M3 14h10" stroke="#ccc" strokeWidth="2" /></svg>
        <svg width="16" height="16" viewBox="0 0 16 16"><circle cx="8" cy="8" r="6.500" fill="#2f78d8" stroke="#ddd" /><text x="8" y="12" textAnchor="middle" fontSize="11" fontWeight="700" fill="#fff">e</text></svg>
        <span className="ml-[15px] text-[13px] font-bold text-[#dde]">»</span>
      </div>
      <TaskBtn active icon={<svg width="20" height="18" viewBox="0 0 20 18"><circle cx="7" cy="5" r="3.500" fill="#e8b878" /><path d="M1 17c0-6 3-8 6-8s5 2 5 8z" fill="#3a6ac8" /><circle cx="13" cy="6" r="3.500" fill="#e0a868" /><path d="M8 17c0-5 2-7 5-7s5 2 5 7z" fill="#50a040" /></svg>}>暮光之城</TaskBtn>
      <div className="w-[6px]" />
      <TaskBtn icon={<svg width="18" height="18" viewBox="0 0 18 18"><circle cx="9" cy="9" r="6" fill="none" stroke="#48a0e8" strokeWidth="3" /><path d="M4 9h10" stroke="#48a0e8" strokeWidth="2" /><path d="M2 16C3 9 10 3 16 1" fill="none" stroke="#e8c040" /></svg>}>电子工程师之家 - 单...</TaskBtn>
      <div className="w-[6px]" />
      <TaskBtn icon={<IsisLogo w={16} h={12} />}><span className="ml-[2px] tracking-[-0.55px]">ds18b20 - ISIS Profes...</span></TaskBtn>
      <div className="ml-auto flex items-center pr-[4px] text-[12px]">
        <span className="flex h-[16px] w-[13px] items-center justify-center bg-[#2d5ca8] text-[10px]">CH</span>
        <span className="ml-[10px] mr-[11px] text-[14px] font-bold">‹</span>
        <svg className="mr-[3px]" width="15" height="18" viewBox="0 0 15 18"><ellipse cx="7" cy="6" rx="4.500" ry="5" fill="#222" /><ellipse cx="7" cy="7" rx="3" ry="3.500" fill="#fff" /><path d="M2 13h10v4H2z" fill="#e84020" /><rect x="7" y="10" width="7" height="7" fill="#f0c030" /></svg>
        <svg className="mr-[1px]" width="17" height="17" viewBox="0 0 17 17"><path d="M1 2h8v8H1z" fill="#c8e0f4" stroke="#222" /><path d="M7 7h8v8H7z" fill="#50a8d8" stroke="#222" /></svg>
        <svg className="mr-[2px]" width="16" height="16" viewBox="0 0 16 16"><rect width="16" height="16" fill="#0a8030" /><circle cx="6" cy="9" r="4" fill="none" stroke="#fff" strokeWidth="2" /><path d="M9 6l5-4" stroke="#fff" strokeWidth="2" /></svg>
        <svg className="mr-[3px]" width="15" height="17" viewBox="0 0 15 17"><path d="M1 2c4 0 5-1 6.500-2C9 1 10 2 14 2c0 8-2 12-6.500 15C3 14 1 10 1 2z" fill="#d82020" stroke="#eee" /><path d="M6 4h3v3h3v3H9v3H6v-3H3V7h3z" fill="#fff" /></svg>
        <svg width="15" height="17" viewBox="0 0 15 17"><path d="M3 5c3-5 8-4 10 0v11H2z" fill="#cfe0f0" /><path d="M5 9h7v3H5z" fill="#4878b8" /></svg>
        <span className="ml-[9px] text-[12px] tracking-[-0.2px] text-[#e8f0f4]">18:38</span>
      </div>
    </div>
  )
}

export default function App() {
  return (
    <div className="relative flex h-[1024px] w-[1280px] flex-col overflow-hidden bg-[radial-gradient(ellipse_at_15%_5%,#3c3c3c,#1c1c1c_55%)] [font-family:'Liberation_Sans','Noto_Sans_CJK_SC',sans-serif]">
      {/* bits of the desktop that show round the window */}
      <div className="absolute left-[33px] top-[4px] h-[9px] w-[22px] rotate-[-20deg] bg-[#a8b4c0]" />
      <div className="absolute left-[96px] top-[3px] h-[10px] w-[32px] border-x-[3px] border-t-[3px] border-[#d8c020] bg-[#1818a0]" />
      <div className="absolute left-[173px] top-[4px] h-[9px] w-[18px] bg-[#3a7cd0] text-center text-[7px] font-bold leading-[9px] text-white">PDF</div>
      <div className="absolute left-[191px] top-[4px] h-[9px] w-[9px] bg-[#e8e8e8]" />
      <div className="absolute left-[1025px] top-0 h-[2px] w-[238px] bg-[#3a9ad0]" />
      <div className="absolute left-[833px] top-[988px] h-[12px] w-[230px] bg-[linear-gradient(90deg,#2a2a2a,#b89a80_15%,#a89080_35%,#3a3a3a_55%,#6a5a50_70%,#2a2a2a)]" />

      <div className="flex min-h-0 flex-1 px-[11px] pb-[13px] pt-[13px]">
        <div className="flex min-w-0 flex-1 flex-col rounded-t-[6px] border-x-[3px] border-b-[3px] border-x-[#5f8fb5] border-b-[#5f8fb5]">
          <TitleBar />
          <MenuBar />
          <Toolbar />
          <div className="flex min-h-0 flex-1 bg-[#ecebf1] pr-[5px]">
            <ToolStrip />
            <Sidebar />
            <div className="mb-[1px] ml-[4px] mt-[1px] min-w-0 flex-1 border border-black bg-[#e0e0d0]">
              <Schematic />
            </div>
          </div>
          <StatusBar />
        </div>
      </div>
      <TaskBar />
    </div>
  )
}
